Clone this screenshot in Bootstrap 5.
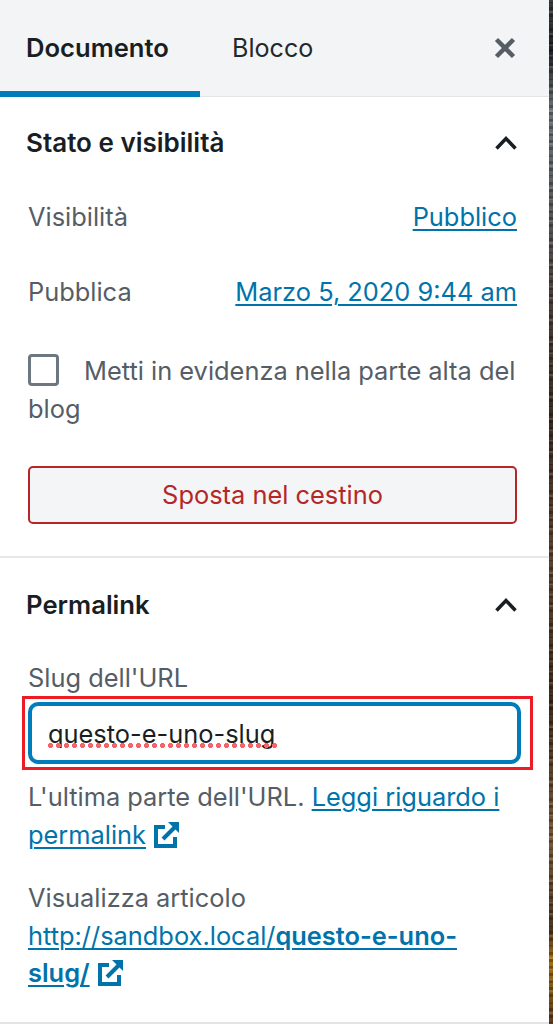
<!DOCTYPE html>
<html lang="it">
<head>
<meta charset="utf-8">
<title>Documento</title>
<link rel="stylesheet" href="https://cdn.jsdelivr.net/npm/bootstrap@5.3.0/dist/css/bootstrap.min.css">
<style>
html,body{height:100%}
body{font-family:Inter,"Liberation Sans",sans-serif;font-size:25.4px;line-height:38px;color:#555d66;overflow:hidden;
 background:repeating-linear-gradient(180deg,rgba(0,0,0,.28) 0 3px,transparent 3px 7px),repeating-linear-gradient(180deg,rgba(255,255,255,.14) 0 2px,transparent 2px 11px),linear-gradient(180deg,#3a3a3a 0,#1f2226 50px,#6d7275 110px,#5c5f62 190px,#4a3d38 300px,#3a2a20 420px,#5c4230 560px,#3d2a1c 700px,#7a5a3a 840px,#4b3320 930px,#a8700f 960px,#5a3a20 1024px)}
.side-panel{width:549px;height:1024px;background:#fff;border-bottom:2px solid #e2e4e7;overflow:hidden}
.tab-head{height:97px;background:#f3f4f5;border-bottom:1px solid #e2e4e7}
.tab-doc{width:200px;height:97px;padding-left:26px;font-size:25.6px;font-weight:600;color:#191e23;border-bottom:6px solid #007cba;line-height:96px;margin-bottom:-1px}
.tab-blk{padding-left:32px;font-size:25.1px;color:#23282d;line-height:96px}
.close-x{margin-right:32px;height:96px}
.sec-title{font-size:26px;font-weight:600;color:#191e23;line-height:38px}
.perma-title{font-size:25.7px}
.panel-sec{padding:0 32px 0 28px}
.sec-one{padding-top:27px;height:461px;border-bottom:2px solid #e7e8ea}
.sec-two{padding-top:28px}
.head-row{height:38px;margin-left:-2px;margin-right:-1px}
.info-row{height:38px;margin-top:37px}
.info-row.first-row{margin-top:36px}
a.doc-link{color:#0073aa;text-decoration:underline;text-underline-offset:3px;text-decoration-thickness:2px}
.check-line{margin-top:41px}
.check-line label{display:inline}
.form-check-input.box-in{width:31px;height:32px;margin:0 25px 0 0;border:3px solid #6c7781;border-radius:4px;vertical-align:-6px;float:none}
.trash-btn{display:block;width:100%;height:58px;margin-top:38px;border:2px solid #b52727;border-radius:5px;background:#f3f5f6;color:#b52727;font-size:25.4px;line-height:1}
.trash-btn:hover{background:#f3f5f6;color:#b52727;border-color:#b52727}
.slug-label{margin-top:35px;height:38px;line-height:38px}
.red-frame{margin:-1px -16px 0 -6px;padding:3px 9px 3px 3px;border:3px solid #ed1c24;height:74px;position:relative}
.slug-in.form-control{height:62px;border:4px solid #007cba;border-radius:10px;padding:0 16px;font-size:25.4px;color:#191e23;box-shadow:none;font-family:inherit}
.spell-dots{position:absolute;left:23px;top:44px;width:229px;height:5px;background:radial-gradient(circle at 2.500px 2.500px,#f4646c 2.400px,transparent 2.600px) repeat-x;background-size:8px 5px}
.hint-txt{margin-top:8px;margin-bottom:0}
.view-block{margin-top:25px}
.view-link{line-height:37px}
.ext-ic{width:27px;height:29px;vertical-align:-5px;margin-left:0}
</style>
</head>
<body>
<div class="side-panel">
  <div class="tab-head d-flex align-items-start">
    <div class="tab-doc">Documento</div>
    <div class="tab-blk flex-grow-1">Blocco</div>
    <div class="close-x d-flex align-items-center">
      <svg width="24" height="24" viewBox="0 0 24 24"><path d="M3.5 3.5 20.500 20.500M20.500 3.500 3.500 20.500" stroke="#555d66" stroke-width="4.500" fill="none"/></svg>
    </div>
  </div>

  <section class="panel-sec sec-one">
    <div class="head-row d-flex justify-content-between align-items-center">
      <span class="sec-title">Stato e visibilità</span>
      <svg width="24" height="16" viewBox="0 0 24 16"><path d="M2.500 13.500 12 3.500l9.500 10" stroke="#191e23" stroke-width="3.500" fill="none"/></svg>
    </div>
    <div class="info-row first-row d-flex justify-content-between">
      <span>Visibilità</span><a href="#" class="doc-link">Pubblico</a>
    </div>
    <div class="info-row d-flex justify-content-between">
      <span>Pubblica</span><a href="#" class="doc-link">Marzo 5, 2020 9:44 am</a>
    </div>
    <div class="check-line">
      <input class="form-check-input box-in" type="checkbox" id="sticky"><label for="sticky">Metti in evidenza nella parte alta del blog</label>
    </div>
    <button type="button" class="btn trash-btn">Sposta nel cestino</button>
  </section>

  <section class="panel-sec sec-two">
    <div class="head-row d-flex justify-content-between align-items-center">
      <span class="sec-title perma-title">Permalink</span>
      <svg width="24" height="16" viewBox="0 0 24 16"><path d="M2.500 13.500 12 3.500l9.500 10" stroke="#191e23" stroke-width="3.500" fill="none"/></svg>
    </div>
    <div class="slug-label">Slug dell'URL</div>
    <div class="red-frame">
      <input class="form-control slug-in" type="text" value="questo-e-uno-slug" spellcheck="false">
      <span class="spell-dots"></span>
    </div>
    <p class="hint-txt">L'ultima parte dell'URL. <a href="#" class="doc-link">Leggi riguardo i permalink</a>
      <svg class="ext-ic" viewBox="0 0 27 29"><path d="M12 7H3v19h19v-9" stroke="#0073aa" stroke-width="4" fill="none"/><path d="M10 19 23 6" stroke="#0073aa" stroke-width="4" fill="none"/><path d="M15 2h11v11z" fill="#0073aa"/></svg></p>
    <div class="view-block">
      <div>Visualizza articolo</div>
      <div class="view-link"><a href="#" class="doc-link">http://sandbox.local/<strong class="fw-semibold">questo-e-uno-slug/</strong></a>
      <svg class="ext-ic" viewBox="0 0 27 29"><path d="M12 7H3v19h19v-9" stroke="#0073aa" stroke-width="4" fill="none"/><path d="M10 19 23 6" stroke="#0073aa" stroke-width="4" fill="none"/><path d="M15 2h11v11z" fill="#0073aa"/></svg></div>
    </div>
  </section>
</div>
<script src="https://cdn.jsdelivr.net/npm/bootstrap@5.3.0/dist/js/bootstrap.bundle.min.js"></script>
</body>
</html>
